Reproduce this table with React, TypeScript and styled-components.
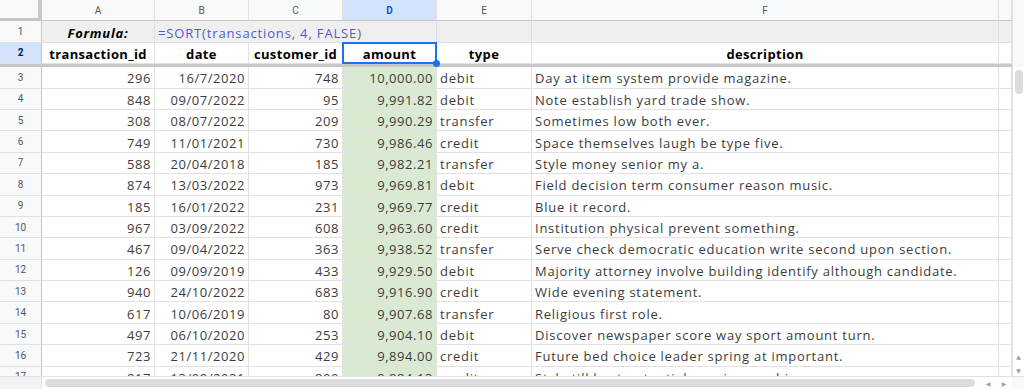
import styled, { createGlobalStyle } from 'styled-components';

const GlobalStyle = createGlobalStyle`
  html, body {
    margin: 0;
    padding: 0;
    background: #fff;
  }
  body {
    font-family: 'Open Sans', 'Liberation Sans', sans-serif;
    overflow: hidden;
  }
`;

const COLS = ['A', 'B', 'C', 'D', 'E', 'F', ''];
const HEADERS = ['transaction_id', 'date', 'customer_id', 'amount', 'type', 'description'];

const rows: string[][] = [
  ['296', '16/7/2020', '748', '10,000.00', 'debit', 'Day at item system provide magazine.'],
  ['848', '09/07/2022', '95', '9,991.82', 'debit', 'Note establish yard trade show.'],
  ['308', '08/07/2022', '209', '9,990.29', 'transfer', 'Sometimes low both ever.'],
  ['749', '11/01/2021', '730', '9,986.46', 'credit', 'Space themselves laugh be type five.'],
  ['588', '20/04/2018', '185', '9,982.21', 'transfer', 'Style money senior my a.'],
  ['874', '13/03/2022', '973', '9,969.81', 'debit', 'Field decision term consumer reason music.'],
  ['185', '16/01/2022', '231', '9,969.77', 'credit', 'Blue it record.'],
  ['967', '03/09/2022', '608', '9,963.60', 'credit', 'Institution physical prevent something.'],
  ['467', '09/04/2022', '363', '9,938.52', 'transfer', 'Serve check democratic education write second upon section.'],
  ['126', '09/09/2019', '433', '9,929.50', 'debit', 'Majority attorney involve building identify although candidate.'],
  ['940', '24/10/2022', '683', '9,916.90', 'credit', 'Wide evening statement.'],
  ['617', '10/06/2019', '80', '9,907.68', 'transfer', 'Religious first role.'],
  ['497', '06/10/2020', '253', '9,904.10', 'debit', 'Discover newspaper score way sport amount turn.'],
  ['723', '21/11/2020', '429', '9,894.00', 'credit', 'Future bed choice leader spring at important.'],
  ['817', '13/09/2021', '890', '9,884.13', 'credit', 'Style till best potential evening machine.'],
];

// right aligned for numbers, left for text
const ALIGN: ('left' | 'right')[] = ['right', 'right', 'right', 'right', 'left', 'left'];

const App = () => {
  return (
    <>
      <GlobalStyle />
      <Frame>
        <Main>
          <Grid>
            <Corner />
            {COLS.map((c) => (
              <ColHead key={c || 'g'} $active={c === 'D'}>
                {c}
              </ColHead>
            ))}

            <RowHead>1</RowHead>
            <Cell $align='center' $bg='#efefef' $bold $italic $color='#000' $spacing={0.75}>
              Formula:
            </Cell>
            <FormulaCell>=SORT(transactions, 4, FALSE)</FormulaCell>
            <Cell $bg='#efefef' />
            <Cell $bg='#efefef' />
            <Cell $bg='#efefef' />

            <RowHead $active>2</RowHead>
            {HEADERS.map((h) =>
              h === 'amount' ? (
                <Cell key={h} $align='center' $bold $color='#000' $spacing={0.35} $selected>
                  {h}
                </Cell>
              ) : (
                <Cell key={h} $align='center' $bold $color='#000' $spacing={0.35}>
                  {h}
                </Cell>
              )
            )}
            <Cell />

            <FreezeBar />

            {rows.map((r, i) => (
              <Row key={i} n={i + 3} values={r} />
            ))}
          </Grid>
          <VScroll>
            <VTop />
            <VTrack>
              <VThumb />
              <ArrowBox>
                <Arrow>▲</Arrow>
                <Arrow>▼</Arrow>
              </ArrowBox>
            </VTrack>
          </VScroll>
        </Main>
        <HScroll>
          <HLeft />
          <HTrack>
            <HThumb />
          </HTrack>
          <HArrows>
            <Arrow>◀</Arrow>
            <Arrow>▶</Arrow>
          </HArrows>
          <HCorner />
        </HScroll>
      </Frame>
    </>
  );
};

const Row = ({ n, values }: { n: number; values: string[] }) => (
  <>
    <RowHead>{n}</RowHead>
    {values.map((v, j) => (
      <Cell
        key={j}
        $align={ALIGN[j]}
        $bg={j === 3 ? '#d9ead3' : undefined}
        $spacing={ALIGN[j] === 'right' ? 0.55 : 0.75}
      >
        {v}
      </Cell>
    ))}
    <Cell />
  </>
);

export default App;

const Frame = styled.div`
  width: 1024px;
  height: 389px;
  display: flex;
  flex-direction: column;
  overflow: hidden;
`;

const Main = styled.div`
  display: flex;
  height: 376px;
`;

const Grid = styled.div`
  width: 1012px;
  height: 376px;
  overflow: hidden;
  display: grid;
  grid-template-columns: 42px 113px 94px 94px 94px 95px 467px 13px;
  grid-template-rows: 21.4px 21.4px 21.4px 3px repeat(15, 21.4px);
  font-size: 13px;
`;

const Corner = styled.div`
  box-sizing: border-box;
  background: #f8f9fa;
  border-right: 4px solid #c7c7c7;
  border-bottom: 3px solid #c7c7c7;
`;

const ColHead = styled.div<{ $active?: boolean }>`
  box-sizing: border-box;
  display: flex;
  align-items: center;
  justify-content: center;
  background: ${(p) => (p.$active ? '#d3e3fd' : '#f8f9fa')};
  color: ${(p) => (p.$active ? '#0b57d0' : '#575757')};
  font-family: Roboto, 'Liberation Sans', sans-serif;
  font-size: 10px;
  font-weight: ${(p) => (p.$active ? 700 : 400)};
  border-right: 1px solid #e1e1e1;
  border-bottom: 1px solid #c4c7c5;
`;

const RowHead = styled.div<{ $active?: boolean }>`
  box-sizing: border-box;
  display: flex;
  align-items: center;
  justify-content: center;
  background: ${(p) => (p.$active ? '#d3e3fd' : '#f8f9fa')};
  color: ${(p) => (p.$active ? '#041e49' : '#575757')};
  font-family: Roboto, 'Liberation Sans', sans-serif;
  font-size: 10px;
  font-weight: ${(p) => (p.$active ? 700 : 400)};
  border-right: 1px solid #c4c7c5;
  border-bottom: 1px solid #e1e1e1;
`;

const Cell = styled.div<{
  $align?: 'left' | 'right' | 'center';
  $bg?: string;
  $bold?: boolean;
  $italic?: boolean;
  $color?: string;
  $spacing?: number;
  $selected?: boolean;
}>`
  position: relative;
  box-sizing: border-box;
  display: flex;
  align-items: center;
  justify-content: ${(p) =>
    p.$align === 'right' ? 'flex-end' : p.$align === 'center' ? 'center' : 'flex-start'};
  padding: 2px 3px 0;
  background: ${(p) => p.$bg || '#fff'};
  color: ${(p) => p.$color || '#3c3c3c'};
  font-weight: ${(p) => (p.$bold ? 700 : 400)};
  font-style: ${(p) => (p.$italic ? 'italic' : 'normal')};
  letter-spacing: ${(p) => p.$spacing ?? 0}px;
  white-space: nowrap;
  overflow: hidden;
  border-right: 1px solid #e1e1e1;
  border-bottom: 1px solid #e1e1e1;

  ${(p) =>
    p.$selected &&
    `
    overflow: visible;
    z-index: 2;
    &::after {
      content: '';
      position: absolute;
      left: -1px;
      top: -1px;
      right: -1px;
      bottom: -1px;
      border: 2px solid #1a73e8;
    }
    &::before {
      content: '';
      position: absolute;
      right: -4px;
      bottom: -4px;
      width: 7px;
      height: 7px;
      border-radius: 50%;
      background: #1a73e8;
      z-index: 3;
    }
  `}
`;

const FormulaCell = styled.div`
  grid-column: span 3;
  box-sizing: border-box;
  display: flex;
  align-items: center;
  padding: 2px 3px 0;
  background: #efefef;
  color: #4f5bd5;
  letter-spacing: 0.85px;
  white-space: nowrap;
  border-right: 1px solid #e1e1e1;
  border-bottom: 1px solid #e1e1e1;
`;

const FreezeBar = styled.div`
  grid-column: 1 / -1;
  background: #c7c7c7;
`;

const VScroll = styled.div`
  width: 12px;
  display: flex;
  flex-direction: column;
  background: #f8f9fa;
  border-left: 1px solid #e1e1e1;
  box-sizing: border-box;
`;

const VTop = styled.div`
  height: 67px;
  background: #f8f9fa;
`;

const VTrack = styled.div`
  flex: 1;
  display: flex;
  flex-direction: column;
  align-items: center;
  justify-content: space-between;
  padding: 3px 0 2px;
  background: #fff;
`;

const VThumb = styled.div`
  width: 8px;
  height: 24px;
  border-radius: 4px;
  background: #dadce0;
`;

const ArrowBox = styled.div`
  display: flex;
  flex-direction: column;
  gap: 7px;
  align-items: center;
`;

const Arrow = styled.span`
  font-size: 6px;
  line-height: 7px;
  color: #9aa0a6;
  font-family: 'DejaVu Sans', sans-serif;
`;

const HScroll = styled.div`
  height: 13px;
  display: flex;
  border-top: 1px solid #e1e1e1;
  box-sizing: border-box;
  background: #fff;
`;

const HLeft = styled.div`
  width: 42px;
  background: #f1f3f4;
  border-right: 1px solid #e1e1e1;
  box-sizing: border-box;
`;

const HTrack = styled.div`
  width: 938px;
  display: flex;
  align-items: center;
  padding-left: 3px;
  box-sizing: border-box;
`;

const HThumb = styled.div`
  width: 930px;
  height: 8px;
  border-radius: 4px;
  background: #dadce0;
`;

const HArrows = styled.div`
  width: 32px;
  display: flex;
  align-items: center;
  justify-content: space-around;
`;

const HCorner = styled.div`
  flex: 1;
  background: #f8f9fa;
`;
